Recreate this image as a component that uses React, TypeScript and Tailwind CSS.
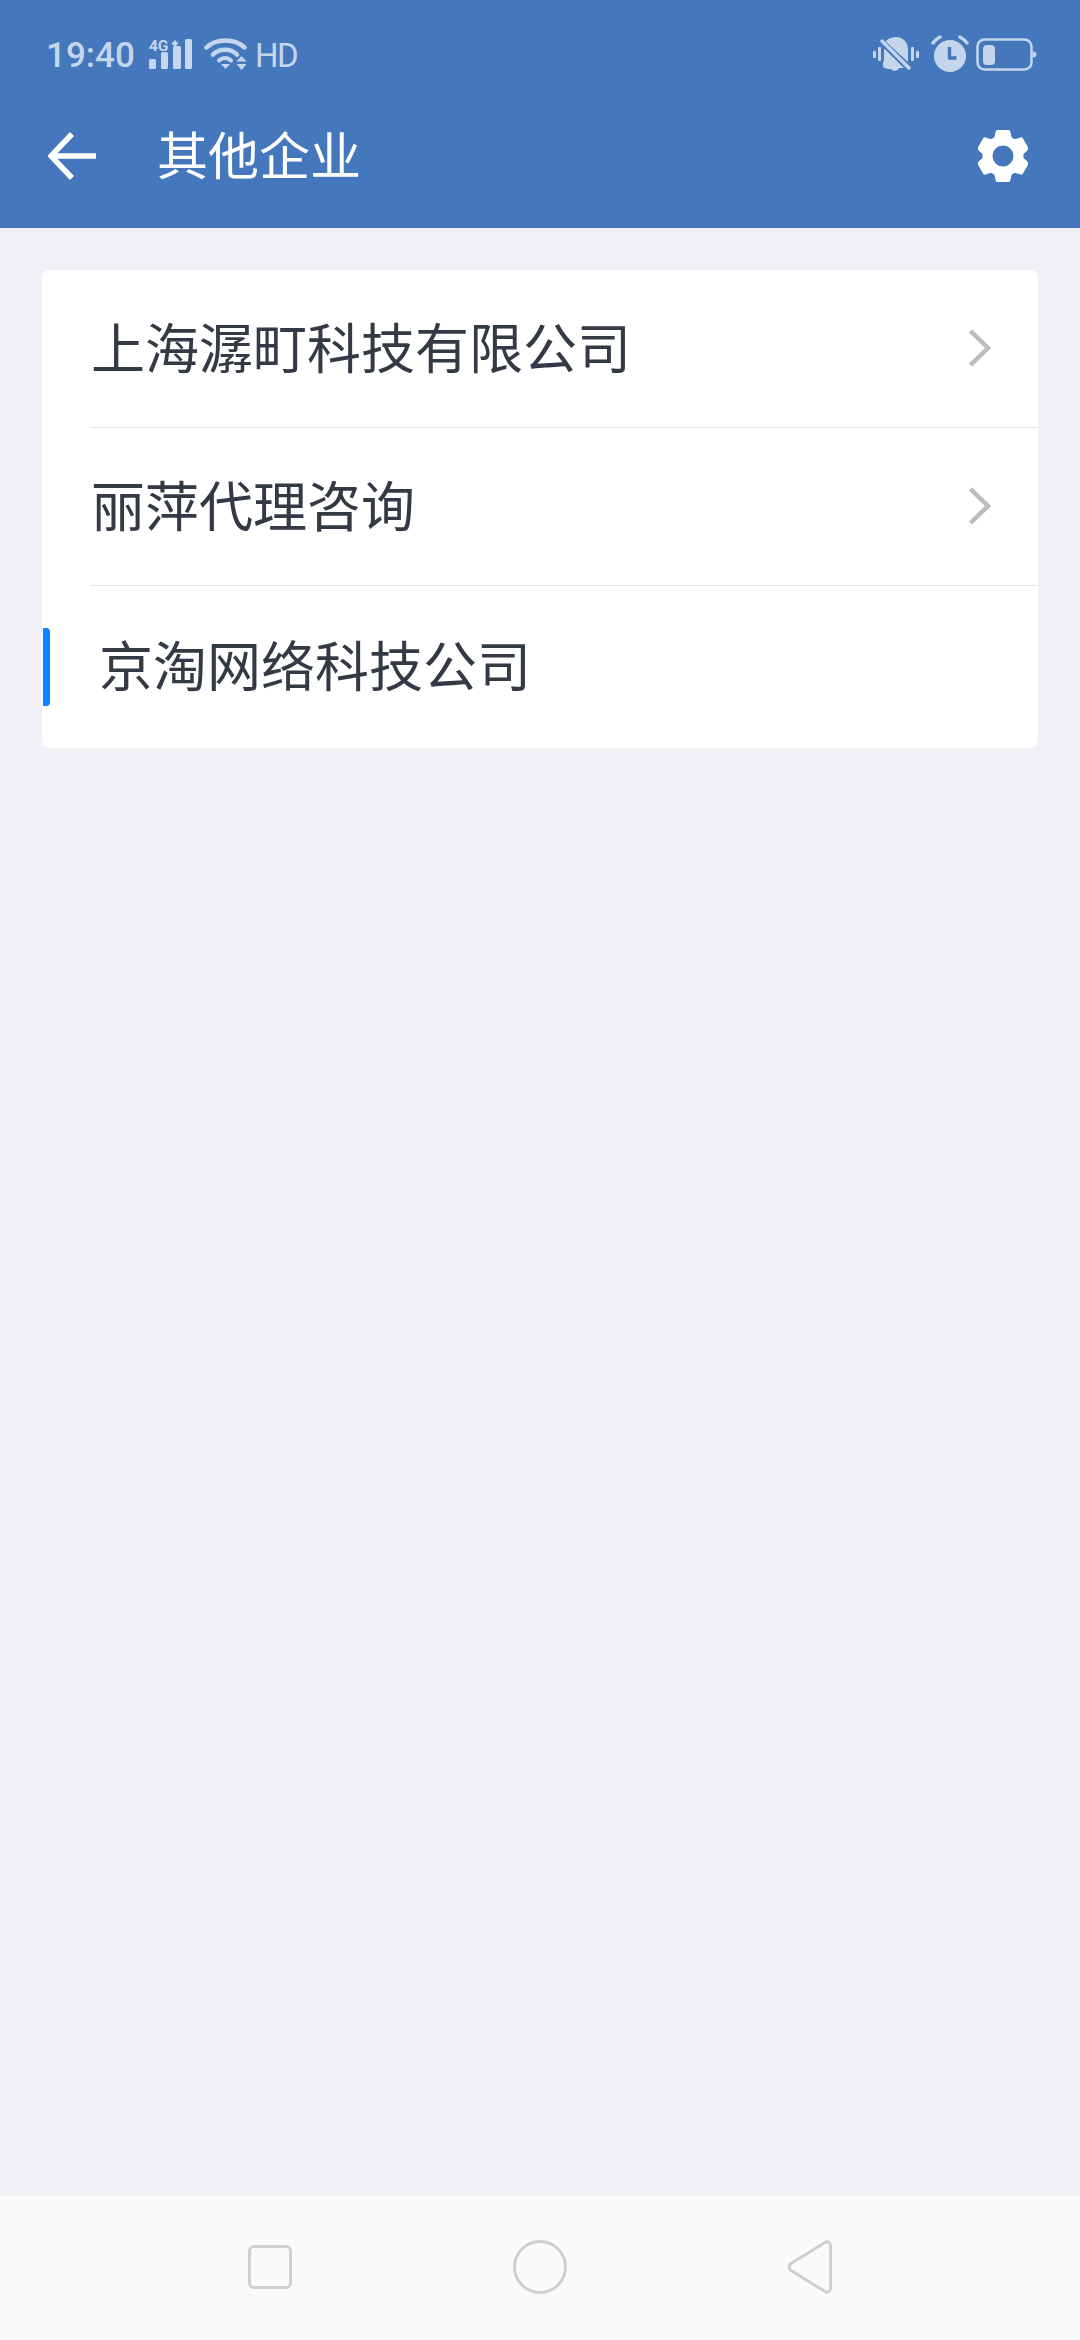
const STATUS_COLOR = "#c5d6ec";

const COMPANIES = [
  { name: "上海潺町科技有限公司", arrow: true },
  { name: "丽萍代理咨询", arrow: true },
];

const Signal = () => (
  <svg className="overflow-visible" width="44" height="32" viewBox="0 0 44 32" fill={STATUS_COLOR}>
    <text x="0" y="13" fontFamily="Roboto, sans-serif" fontWeight="700" fontSize="15.5" letterSpacing="-0.2">4G</text>
    <path d="M26 2.500v6M23 5.500h6" stroke={STATUS_COLOR} strokeWidth="2.500" />
    <rect x="0" y="21" width="7" height="10" rx="1.500" />
    <rect x="12" y="14" width="7" height="17" rx="1.500" />
    <rect x="24" y="8" width="8" height="23" rx="1.500" />
    <rect x="36" y="1" width="7" height="30" rx="1.500" />
  </svg>
);

const Wifi = () => (
  <svg width="44" height="34" viewBox="0 0 44 34" fill="none" stroke={STATUS_COLOR} strokeLinecap="round">
    <path d="M2.500 10.500C12 1 31 1 40.500 10.500" strokeWidth="4.500" />
    <path d="M9 17.500C15 11 27 11 33 17.500" strokeWidth="4.500" />
    <path d="M15 23.500C18.500 20 23.500 20 27 23.500" strokeWidth="4" />
    <path d="M17 27h9l-4.500 5z" fill={STATUS_COLOR} stroke="none" />
    <path d="M32.500 24.500h10l-5-5.500zM32.500 27h10l-5 6z" fill={STATUS_COLOR} stroke="none" />
  </svg>
);

const MutedBell = () => (
  <svg width="46" height="36" viewBox="0 0 46 36" fill={STATUS_COLOR}>
    <rect x="0" y="14" width="3" height="7" rx="1" />
    <rect x="5" y="10" width="3" height="14" rx="1" />
    <rect x="38" y="10" width="3" height="14" rx="1" />
    <rect x="43" y="14" width="3" height="7" rx="1" />
    <path d="M11 6C14 2 18 0 23 0c7 0 12 5 12 12v13L12 4z" />
    <path d="M11 11l19 18 2 2h-6c-1 3-6 4-8 1-3 0-8 0-8-3v-3c0-1 1-2 1-3z" />
    <path d="M9 5l26 26" stroke="#4577bd" strokeWidth="6" />
    <path d="M9 4l27 27" stroke={STATUS_COLOR} strokeWidth="3.500" strokeLinecap="round" />
  </svg>
);

const Alarm = () => (
  <svg width="38" height="38" viewBox="0 0 38 38" fill="none">
    <circle cx="19" cy="22" r="16" fill={STATUS_COLOR} />
    <path d="M2 9C4 6.500 6 4.500 9 3M36 9C34 6.500 32 4.500 29 3" stroke={STATUS_COLOR} strokeWidth="3.500" strokeLinecap="round" />
    <path d="M18.500 13v11h7" stroke="#4577bd" strokeWidth="3.500" strokeLinejoin="round" />
  </svg>
);

const Battery = () => (
  <svg width="61" height="34" viewBox="0 0 61 34" fill="none">
    <rect x="1.500" y="1.500" width="54" height="30" rx="7" stroke={STATUS_COLOR} strokeWidth="2.500" />
    <rect x="7" y="7" width="12" height="20" rx="4" fill={STATUS_COLOR} />
    <path d="M57 13.500c2.500 0 3.500 1.500 3.500 3s-1 3-3.500 3z" fill={STATUS_COLOR} />
  </svg>
);

const Gear = () => (
  <svg width="50" height="54" viewBox="0 0 50 54" fill="#fff">
    <circle cx="25" cy="27" r="15.500" fill="none" stroke="#fff" strokeWidth="10" />
    {[0, 60, 120, 180, 240, 300].map((deg) => (
      <path key={deg} d="M19.500 1h11c1 0 1.500.5 1.700 1.500L34 10H16l1.800-7.500c.2-1 .7-1.500 1.700-1.500z" transform={`rotate(${deg} 25 27)`} />
    ))}
  </svg>
);

const Chevron = () => (
  <svg width="24" height="38" viewBox="0 0 24 38" fill="none">
    <path d="M2.500 2L20 19 2.500 36" stroke="#bcbcbc" strokeWidth="4.500" />
  </svg>
);

export default function App() {
  return (
    <div className="flex h-[2340px] w-[1080px] flex-col overflow-hidden bg-[#eff1f5] font-['Noto_Sans_CJK_SC','Noto_Sans',sans-serif]">
      <header className="h-[228px] bg-[#4577bd]">
        <div className="flex h-[84px] items-start pl-[46px] pr-[43px] pt-[34px] text-[#c5d6ec]">
          <span className="w-[89px] font-['Roboto',sans-serif] text-[35px] font-medium leading-[44px]">19:40</span>
          <div className="ml-[14px] mt-[4px]"><Signal /></div>
          <div className="ml-[11px] mt-[3px]"><Wifi /></div>
          <span className="ml-[7px] font-['Roboto',sans-serif] text-[33px] leading-[44px] tracking-[-1.5px]">HD</span>
          <div className="ml-auto mt-[3px]"><MutedBell /></div>
          <div className="ml-[12px] mt-0"><Alarm /></div>
          <div className="ml-[7px] mt-[4px]"><Battery /></div>
        </div>
        <div className="flex h-[144px] items-center pl-[48px] pr-[52px]">
          <svg width="50" height="48" viewBox="0 0 50 48" fill="none">
            <path d="M48 24H4M24 2L3 24l21 22" stroke="#fff" strokeWidth="5.500" />
          </svg>
          <h1 className="ml-[59px] pb-[5px] text-[51px] font-normal leading-none text-white">其他企业</h1>
          <div className="ml-auto"><Gear /></div>
        </div>
      </header>

      <main className="flex-1 px-[42px] pt-[42px]">
        <div className="overflow-hidden rounded-[8px] bg-white">
          {COMPANIES.map((company) => (
            <div key={company.name} className="ml-[48px] flex h-[158px] items-center justify-between border-b border-[#e5e5e5] pr-[46px]">
              <span className="ml-[1px] pb-[6px] text-[54px] leading-none text-[#333a45]">{company.name}</span>
              <div className="pb-[2px]"><Chevron /></div>
            </div>
          ))}
          <div className="flex h-[162px] items-center pl-[1px]">
            <span className="h-[78px] w-[7px] rounded-r-[4px] bg-[#0a84ff]" />
            <span className="ml-[49px] pb-[7px] text-[54px] leading-none text-[#333a45]">京淘网络科技公司</span>
          </div>
        </div>
      </main>

      <nav className="flex h-[144px] items-center bg-[#fafafa] pb-[3px] pl-[248px]">
        <span className="h-[44px] w-[44px] rounded-[6px] border-[3px] border-[#cfcfcf]" />
        <span className="ml-[221px] h-[54px] w-[54px] rounded-full border-[3px] border-[#cfcfcf]" />
        <svg className="ml-[220px]" width="46" height="54" viewBox="0 0 46 54" fill="none">
          <path d="M4 23.500L38 2.500c2.500-1.500 5.500 0 5.500 3v43c0 3-3 4.500-5.500 3L4 30.500c-2.500-2-2.500-5 0-7z" stroke="#cfcfcf" strokeWidth="3" />
        </svg>
      </nav>
    </div>
  );
}
